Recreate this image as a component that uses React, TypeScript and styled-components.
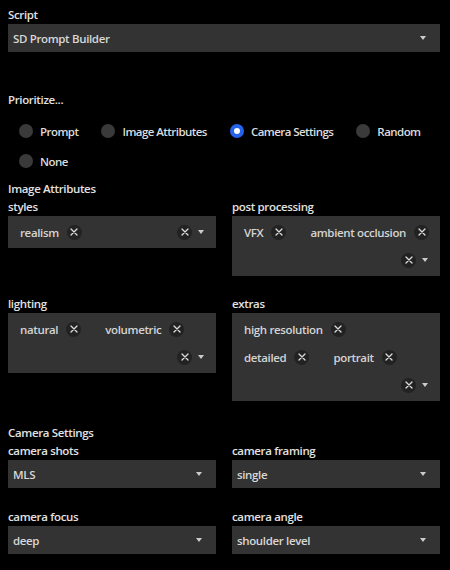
import React from "react";
import styled, { createGlobalStyle } from "styled-components";

const GlobalStyle = createGlobalStyle`
  html, body {
    margin: 0;
    background: #000;
  }
  body {
    font-family: "Open Sans", "Noto Sans", sans-serif;
    font-size: 11.5px;
    letter-spacing: -0.35px;
    color: #ddd;
  }
`;

const Page = styled.div`
  padding: 6px 10px 0 8px;
  display: flex;
  flex-direction: column;
`;

const Label = styled.div`
  font-weight: 600;
  line-height: 18px;
  color: #e2e2e2;
`;

const Heading = styled(Label)<{ $top?: number }>`
  margin-top: ${(p) => p.$top ?? 0}px;
`;

const Select = styled.div`
  height: 28px;
  background: #333;
  display: flex;
  align-items: center;
  justify-content: space-between;
  padding: 0 14px 0 5px;
  color: #d8d8d8;
  font-weight: 600;
`;

const Caret = styled.span`
  width: 0;
  height: 0;
  border-left: 3.5px solid transparent;
  border-right: 3.5px solid transparent;
  border-top: 4px solid #ccc;
`;

const RadioGroup = styled.div`
  display: flex;
  flex-wrap: wrap;
  column-gap: 23px;
  row-gap: 16px;
  padding: 15px 0 0 11px;
  margin-bottom: 12px;
`;

const RadioItem = styled.div`
  display: flex;
  align-items: center;
  gap: 7px;
  height: 14px;
  color: #dcdcdc;
  font-weight: 600;
  letter-spacing: -0.55px;
`;

const Dot = styled.span<{ $on?: boolean }>`
  width: 14px;
  height: 14px;
  border-radius: 50%;
  box-sizing: border-box;
  background: ${(p) => (p.$on ? "#fff" : "#3a3a3a")};
  border: ${(p) => (p.$on ? "4px solid #2563eb" : "none")};
  box-shadow: 1px 2px 3px rgba(0, 0, 0, 0.8);
`;

const Grid = styled.div<{ $rowGap?: number }>`
  display: grid;
  grid-template-columns: 1fr 1fr;
  column-gap: 16px;
  row-gap: ${(p) => p.$rowGap ?? 20}px;
  align-items: start;
`;

const Field = styled.div`
  display: flex;
  flex-direction: column;
`;

const Multi = styled.div`
  background: #333;
  display: flex;
  flex-wrap: wrap;
  align-items: center;
  row-gap: 4px;
  column-gap: 12px;
  padding: 4px 4px 4px 6px;
`;

const Chip = styled.div`
  display: flex;
  align-items: center;
  gap: 8px;
  height: 24px;
  padding: 0 6px;
  color: #d4d4d4;
  font-weight: 600;
`;

const XBtn = styled.span`
  width: 15px;
  height: 15px;
  border-radius: 50%;
  background: #222;
  display: flex;
  align-items: center;
  justify-content: center;
`;

const Controls = styled.div`
  margin-left: auto;
  display: flex;
  align-items: center;
  gap: 6px;
  height: 24px;
  padding-right: 8px;
`;

const Cross = () => (
  <svg width="8" height="8" viewBox="0 0 8 8">
    <path d="M1 1L7 7M7 1L1 7" stroke="#ddd" strokeWidth="1.3" strokeLinecap="round" />
  </svg>
);

const MultiSelect = ({ values }: { values: string[] }) => (
  <Multi>
    {values.map((v) => (
      <Chip key={v}>
        {v}
        <XBtn>
          <Cross />
        </XBtn>
      </Chip>
    ))}
    <Controls>
      <XBtn>
        <Cross />
      </XBtn>
      <Caret />
    </Controls>
  </Multi>
);

const Dropdown = ({ value }: { value: string }) => (
  <Select>
    {value}
    <Caret />
  </Select>
);

const priorities = ["Prompt", "Image Attributes", "Camera Settings", "Random", "None"];

export default function App() {
  return (
    <>
      <GlobalStyle />
      <Page>
        <Label>Script</Label>
        <Select>
          SD Prompt Builder
          <Caret />
        </Select>

        <Heading $top={39}>Prioritize...</Heading>
        <RadioGroup>
          {priorities.map((p) => (
            <RadioItem key={p}>
              <Dot $on={p === "Camera Settings"} />
              {p}
            </RadioItem>
          ))}
        </RadioGroup>

        <Label>Image Attributes</Label>
        <Grid $rowGap={19}>
          <Field>
            <Label>styles</Label>
            <MultiSelect values={["realism"]} />
          </Field>
          <Field>
            <Label>post processing</Label>
            <MultiSelect values={["VFX", "ambient occlusion"]} />
          </Field>
          <Field>
            <Label>lighting</Label>
            <MultiSelect values={["natural", "volumetric"]} />
          </Field>
          <Field>
            <Label>extras</Label>
            <MultiSelect values={["high resolution", "detailed", "portrait"]} />
          </Field>
        </Grid>

        <Heading $top={23}>Camera Settings</Heading>
        <Grid $rowGap={20}>
          <Field>
            <Label>camera shots</Label>
            <Dropdown value="MLS" />
          </Field>
          <Field>
            <Label>camera framing</Label>
            <Dropdown value="single" />
          </Field>
          <Field>
            <Label>camera focus</Label>
            <Dropdown value="deep" />
          </Field>
          <Field>
            <Label>camera angle</Label>
            <Dropdown value="shoulder level" />
          </Field>
        </Grid>
      </Page>
    </>
  );
}
